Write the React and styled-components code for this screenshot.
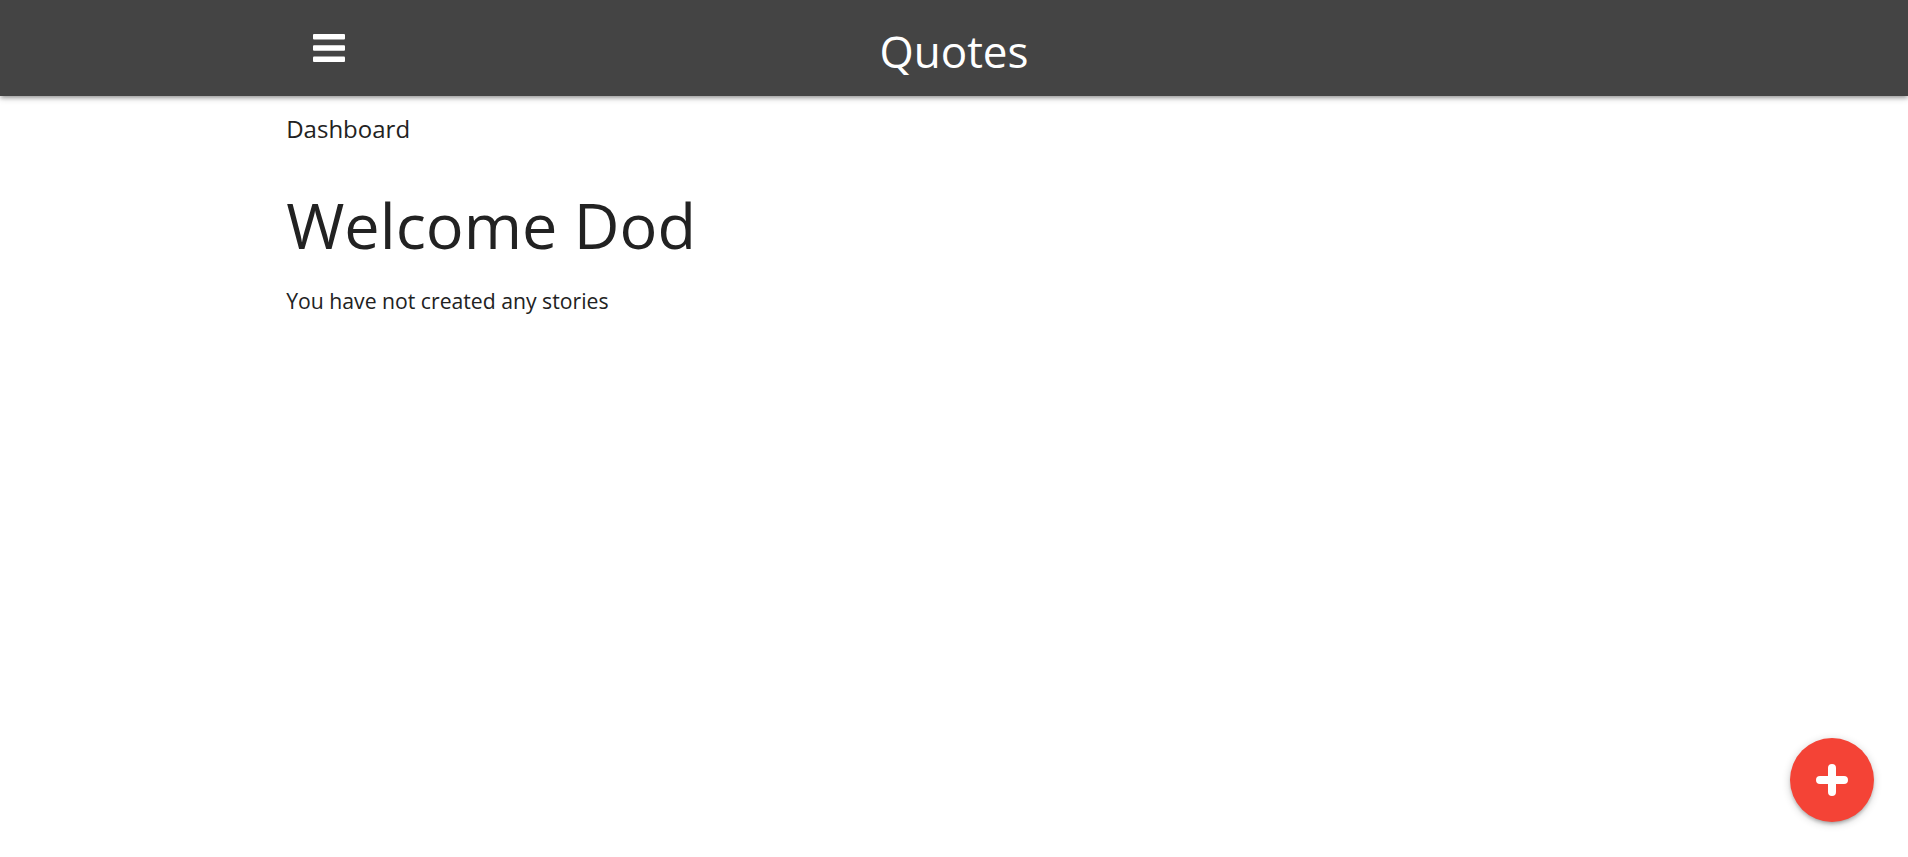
import styled, { createGlobalStyle } from 'styled-components';

const Global = createGlobalStyle`
  html, body {
    margin: 0;
    padding: 0;
    background: #fff;
    font-family: "Open Sans", "Noto Sans", sans-serif;
    color: #222;
  }
`;

const Nav = styled.nav`
  height: 96px;
  background-color: #444;
  color: #fff;
  box-shadow: 0 3px 3px 0 rgba(0, 0, 0, 0.14), 0 4px 2px -3px rgba(0, 0, 0, 0.12),
    0 2px 7px 0 rgba(0, 0, 0, 0.2);
  position: relative;
  z-index: 2;
`;

const NavInner = styled.div`
  width: 70%;
  height: 100%;
  margin: 0 auto;
  display: grid;
  grid-template-columns: 1fr auto 1fr;
  align-items: center;
`;

const MenuBtn = styled.button`
  justify-self: start;
  margin-left: 27px;
  padding: 0;
  border: none;
  background: none;
  color: #fff;
  display: flex;
  cursor: pointer;
`;

const Brand = styled.a`
  font-size: 44px;
  line-height: 90px;
  padding-top: 6px;
  color: #fff;
  text-decoration: none;
`;

const Main = styled.main`
  width: 70%;
  margin: 0 auto;
  padding-top: 17px;
`;

const Crumb = styled.div`
  font-size: 24px;
  line-height: 32px;
`;

const Title = styled.h1`
  margin: 45px 0 0;
  font-size: 63px;
  font-weight: 400;
  line-height: 69px;
`;

const Note = styled.p`
  margin: 27px 0 0;
  font-size: 21.2px;
  line-height: 30px;
`;

const Fab = styled.button`
  position: fixed;
  right: 34px;
  bottom: 35px;
  width: 84px;
  height: 84px;
  border-radius: 50%;
  border: none;
  padding: 0;
  background-color: #f44336;
  display: flex;
  align-items: center;
  justify-content: center;
  cursor: pointer;
  box-shadow: 0 3px 3px 0 rgba(0, 0, 0, 0.14), 0 4px 2px -3px rgba(0, 0, 0, 0.12),
    0 2px 8px 0 rgba(0, 0, 0, 0.2);
`;

export default function App() {
  return (
    <>
      <Global />
      <Nav>
        <NavInner>
          <MenuBtn aria-label="menu">
            <svg width="32" height="28" viewBox="0 0 32 28">
              <rect x="0" y="0" width="32" height="5.5" rx="1" fill="#fff" />
              <rect x="0" y="11.3" width="32" height="5.5" rx="1" fill="#fff" />
              <rect x="0" y="22.5" width="32" height="5.5" rx="1" fill="#fff" />
            </svg>
          </MenuBtn>
          <Brand href="#">Quotes</Brand>
          <div />
        </NavInner>
      </Nav>
      <Main>
        <Crumb>Dashboard</Crumb>
        <Title>Welcome Dod</Title>
        <Note>You have not created any stories</Note>
      </Main>
      <Fab aria-label="add">
        <svg width="32" height="32" viewBox="0 0 32 32">
          <path d="M16 4v24M4 16h24" stroke="#fff" strokeWidth="8" strokeLinecap="round" />
        </svg>
      </Fab>
    </>
  );
}
